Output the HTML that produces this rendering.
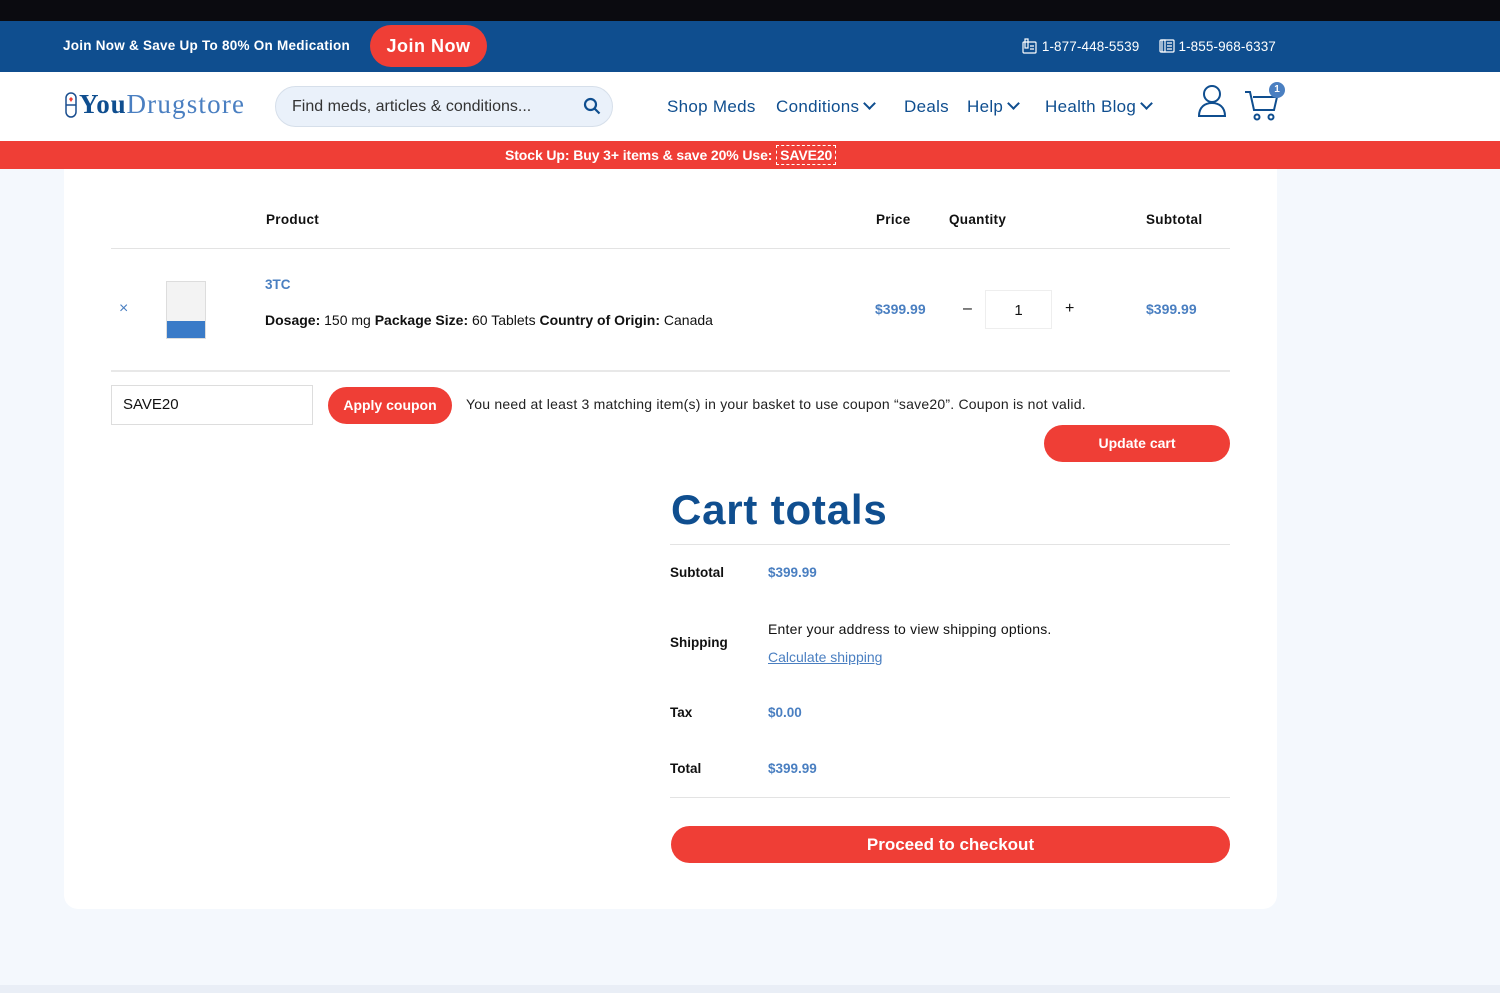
<!DOCTYPE html>
<html><head><meta charset="utf-8"><style>
*{box-sizing:border-box;margin:0;padding:0}
body{width:1500px;height:993px;background:#f4f8fd;font-family:"Liberation Sans",sans-serif;color:#111;position:relative;overflow:hidden}
.abs{position:absolute;white-space:nowrap}
.blue{color:#4a7fc1}
.btn{background:#ef3e36;color:#fff;font-weight:bold;border-radius:20px;text-align:center}
.chev{display:inline-block;width:9px;height:9px;border-right:2px solid #0f4e8f;border-bottom:2px solid #0f4e8f;transform:rotate(45deg);margin:0 4px 4px 6px}
</style></head><body>
<div class="abs" style="left:0;top:0;width:1500px;height:21px;background:#0b0b10"></div>
<div class="abs" style="left:0;top:21px;width:1500px;height:51px;background:#0f4e8f"></div>
<div class="abs" style="left:63px;top:38px;color:#fff;font-size:13.5px;font-weight:bold;letter-spacing:0.25px">Join Now &amp; Save Up To 80% On Medication</div>
<div class="abs btn" style="left:370px;top:25px;width:117px;height:42px;line-height:42px;font-size:18px;border-radius:21px;letter-spacing:0.5px">Join Now</div>
<div class="abs" style="left:1022px;top:38px;color:#fff;font-size:13.5px;letter-spacing:0.1px">
<svg width="16" height="16" viewBox="0 0 16 16" style="vertical-align:-3px" fill="none" stroke="#fff" stroke-width="1.2"><rect x="1" y="4" width="13" height="11" rx="1"/><rect x="3" y="1" width="3" height="9"/><path d="M8 8h4M8 11h4"/></svg> 1-877-448-5539&nbsp;&nbsp;&nbsp;&nbsp;
<svg width="16" height="16" viewBox="0 0 16 16" style="vertical-align:-3px" fill="none" stroke="#fff" stroke-width="1.2"><rect x="1" y="2" width="14" height="12" rx="1"/><rect x="3" y="2" width="3" height="12"/><path d="M8 5h5M8 8h5M8 11h5"/></svg> 1-855-968-6337</div>
<div class="abs" style="left:0;top:72px;width:1500px;height:69px;background:#fff"></div>
<svg class="abs" style="left:64px;top:92px" width="14" height="26" viewBox="0 0 14 26" fill="none" stroke="#1a4e8f" stroke-width="1.5"><rect x="2" y="1" width="10" height="24" rx="5"/><path d="M2 13h10"/><path d="M5 7l2-2 2 2-2 3z" fill="#ef3e36" stroke="none"/></svg>
<div class="abs" style="left:79px;top:89px;font-family:'Liberation Serif',serif;font-size:27px;color:#0f4e8f;letter-spacing:0.8px"><b>You</b><span style="color:#4a7fc1;letter-spacing:1.2px">Drugstore</span></div>
<div class="abs" style="left:275px;top:86px;width:338px;height:41px;border-radius:21px;background:#eaf1fa;border:1px solid #d6dfea"></div>
<div class="abs" style="left:292px;top:98px;font-size:16px;color:#333">Find meds, articles &amp; conditions...</div>
<svg class="abs" style="left:583px;top:97px" width="18" height="18" viewBox="0 0 18 18" fill="none" stroke="#0f4e8f" stroke-width="2.2"><circle cx="7.5" cy="7.5" r="5.5"/><path d="M11.5 11.5l5 5"/></svg>
<div class="abs" style="left:667px;top:97px;font-size:17px;color:#0f4e8f;letter-spacing:0.3px">Shop Meds</div>
<div class="abs" style="left:776px;top:97px;font-size:17px;color:#0f4e8f;letter-spacing:0.3px">Conditions<span class="chev"></span></div>
<div class="abs" style="left:904px;top:97px;font-size:17px;color:#0f4e8f;letter-spacing:0.3px">Deals</div>
<div class="abs" style="left:967px;top:97px;font-size:17px;color:#0f4e8f;letter-spacing:0.3px">Help<span class="chev"></span></div>
<div class="abs" style="left:1045px;top:97px;font-size:17px;color:#0f4e8f;letter-spacing:0.3px">Health Blog<span class="chev"></span></div>
<svg class="abs" style="left:1197px;top:84px" width="30" height="34" viewBox="0 0 30 34" fill="none" stroke="#0f4e8f" stroke-width="2"><circle cx="15" cy="10" r="8"/><path d="M2 32c0-9 6-13 13-13s13 4 13 13z"/></svg>
<svg class="abs" style="left:1244px;top:88px" width="36" height="34" viewBox="0 0 36 34" fill="none" stroke="#0f4e8f" stroke-width="2"><path d="M1 4h5l4 18h20l3-13H9"/><circle cx="13" cy="29" r="2.5"/><circle cx="27" cy="29" r="2.5"/></svg>
<div class="abs" style="left:1269px;top:82px;width:16px;height:16px;border-radius:8px;background:#4a7fc1;color:#fff;font-size:10px;font-weight:bold;text-align:center;line-height:16px">1</div>
<div class="abs" style="left:0;top:141px;width:1500px;height:28px;background:#ef3e36"></div>
<div class="abs" style="left:505px;top:147px;color:#fff;font-size:14px;font-weight:bold;letter-spacing:-0.1px">Stock Up: Buy 3+ items &amp; save 20% Use: <span style="border:1.5px dashed #fff;padding:1px 3px">SAVE20</span></div>
<div class="abs" style="left:64px;top:169px;width:1213px;height:740px;background:#fff;border-radius:0 0 14px 14px"></div>
<div class="abs" style="left:266px;top:212px;font-size:13.5px;font-weight:bold;letter-spacing:0.3px">Product</div>
<div class="abs" style="left:876px;top:212px;font-size:13.5px;font-weight:bold;letter-spacing:0.3px">Price</div>
<div class="abs" style="left:949px;top:212px;font-size:13.5px;font-weight:bold;letter-spacing:0.3px">Quantity</div>
<div class="abs" style="left:1146px;top:212px;font-size:13.5px;font-weight:bold;letter-spacing:0.3px">Subtotal</div>
<div class="abs" style="left:111px;top:248px;width:1119px;height:1px;background:#e3e3e3"></div>
<div class="abs" style="left:119px;top:300px;font-size:16px;color:#4a7fc1">×</div>
<div class="abs" style="left:166px;top:281px;width:40px;height:58px;background:linear-gradient(#f3f3f3 70%,#3a7bc8 70%);border:1px solid #ddd"></div>
<div class="abs blue" style="left:265px;top:277px;font-size:13.5px;font-weight:bold">3TC</div>
<div class="abs" style="left:265px;top:312px;font-size:14px"><b>Dosage:</b> 150 mg <b>Package Size:</b> 60 Tablets <b>Country of Origin:</b> Canada</div>
<div class="abs blue" style="left:875px;top:301px;font-size:14px;font-weight:bold">$399.99</div>
<div class="abs" style="left:963px;top:300px;font-size:16px">–</div>
<div class="abs" style="left:985px;top:290px;width:67px;height:39px;border:1px solid #eee;text-align:center;line-height:39px;font-size:15px">1</div>
<div class="abs" style="left:1065px;top:300px;font-size:16px">+</div>
<div class="abs blue" style="left:1146px;top:301px;font-size:14px;font-weight:bold">$399.99</div>
<div class="abs" style="left:111px;top:370px;width:1119px;height:2px;background:#e8e8e8"></div>
<div class="abs" style="left:111px;top:385px;width:202px;height:40px;border:1px solid #ddd;font-size:15px;padding:10px 11px">SAVE20</div>
<div class="abs btn" style="left:328px;top:387px;width:124px;height:37px;line-height:37px;font-size:14px">Apply coupon</div>
<div class="abs" style="left:466px;top:396px;font-size:14px;color:#222;letter-spacing:0.22px">You need at least 3 matching item(s) in your basket to use coupon “save20”. Coupon is not valid.</div>
<div class="abs btn" style="left:1044px;top:425px;width:186px;height:37px;line-height:37px;font-size:14px">Update cart</div>
<div class="abs" style="left:671px;top:486px;font-size:42px;font-weight:bold;color:#0f4e8f;letter-spacing:0.8px">Cart totals</div>
<div class="abs" style="left:670px;top:544px;width:560px;height:1px;background:#e3e3e3"></div>
<div class="abs" style="left:670px;top:565px;font-size:13.5px;font-weight:bold">Subtotal</div>
<div class="abs blue" style="left:768px;top:565px;font-size:13.5px;font-weight:bold">$399.99</div>
<div class="abs" style="left:670px;top:635px;font-size:13.5px;font-weight:bold">Shipping</div>
<div class="abs" style="left:768px;top:621px;font-size:14px;letter-spacing:0.2px">Enter your address to view shipping options.</div>
<div class="abs blue" style="left:768px;top:649px;font-size:14px;text-decoration:underline">Calculate shipping</div>
<div class="abs" style="left:670px;top:705px;font-size:13.5px;font-weight:bold">Tax</div>
<div class="abs blue" style="left:768px;top:705px;font-size:13.5px;font-weight:bold">$0.00</div>
<div class="abs" style="left:670px;top:761px;font-size:13.5px;font-weight:bold">Total</div>
<div class="abs blue" style="left:768px;top:761px;font-size:13.5px;font-weight:bold">$399.99</div>
<div class="abs" style="left:670px;top:797px;width:560px;height:1px;background:#e3e3e3"></div>
<div class="abs btn" style="left:671px;top:826px;width:559px;height:37px;line-height:37px;font-size:17px">Proceed to checkout</div>
<div class="abs" style="left:0;top:985px;width:1500px;height:8px;background:#e9eef6"></div>
</body></html>
